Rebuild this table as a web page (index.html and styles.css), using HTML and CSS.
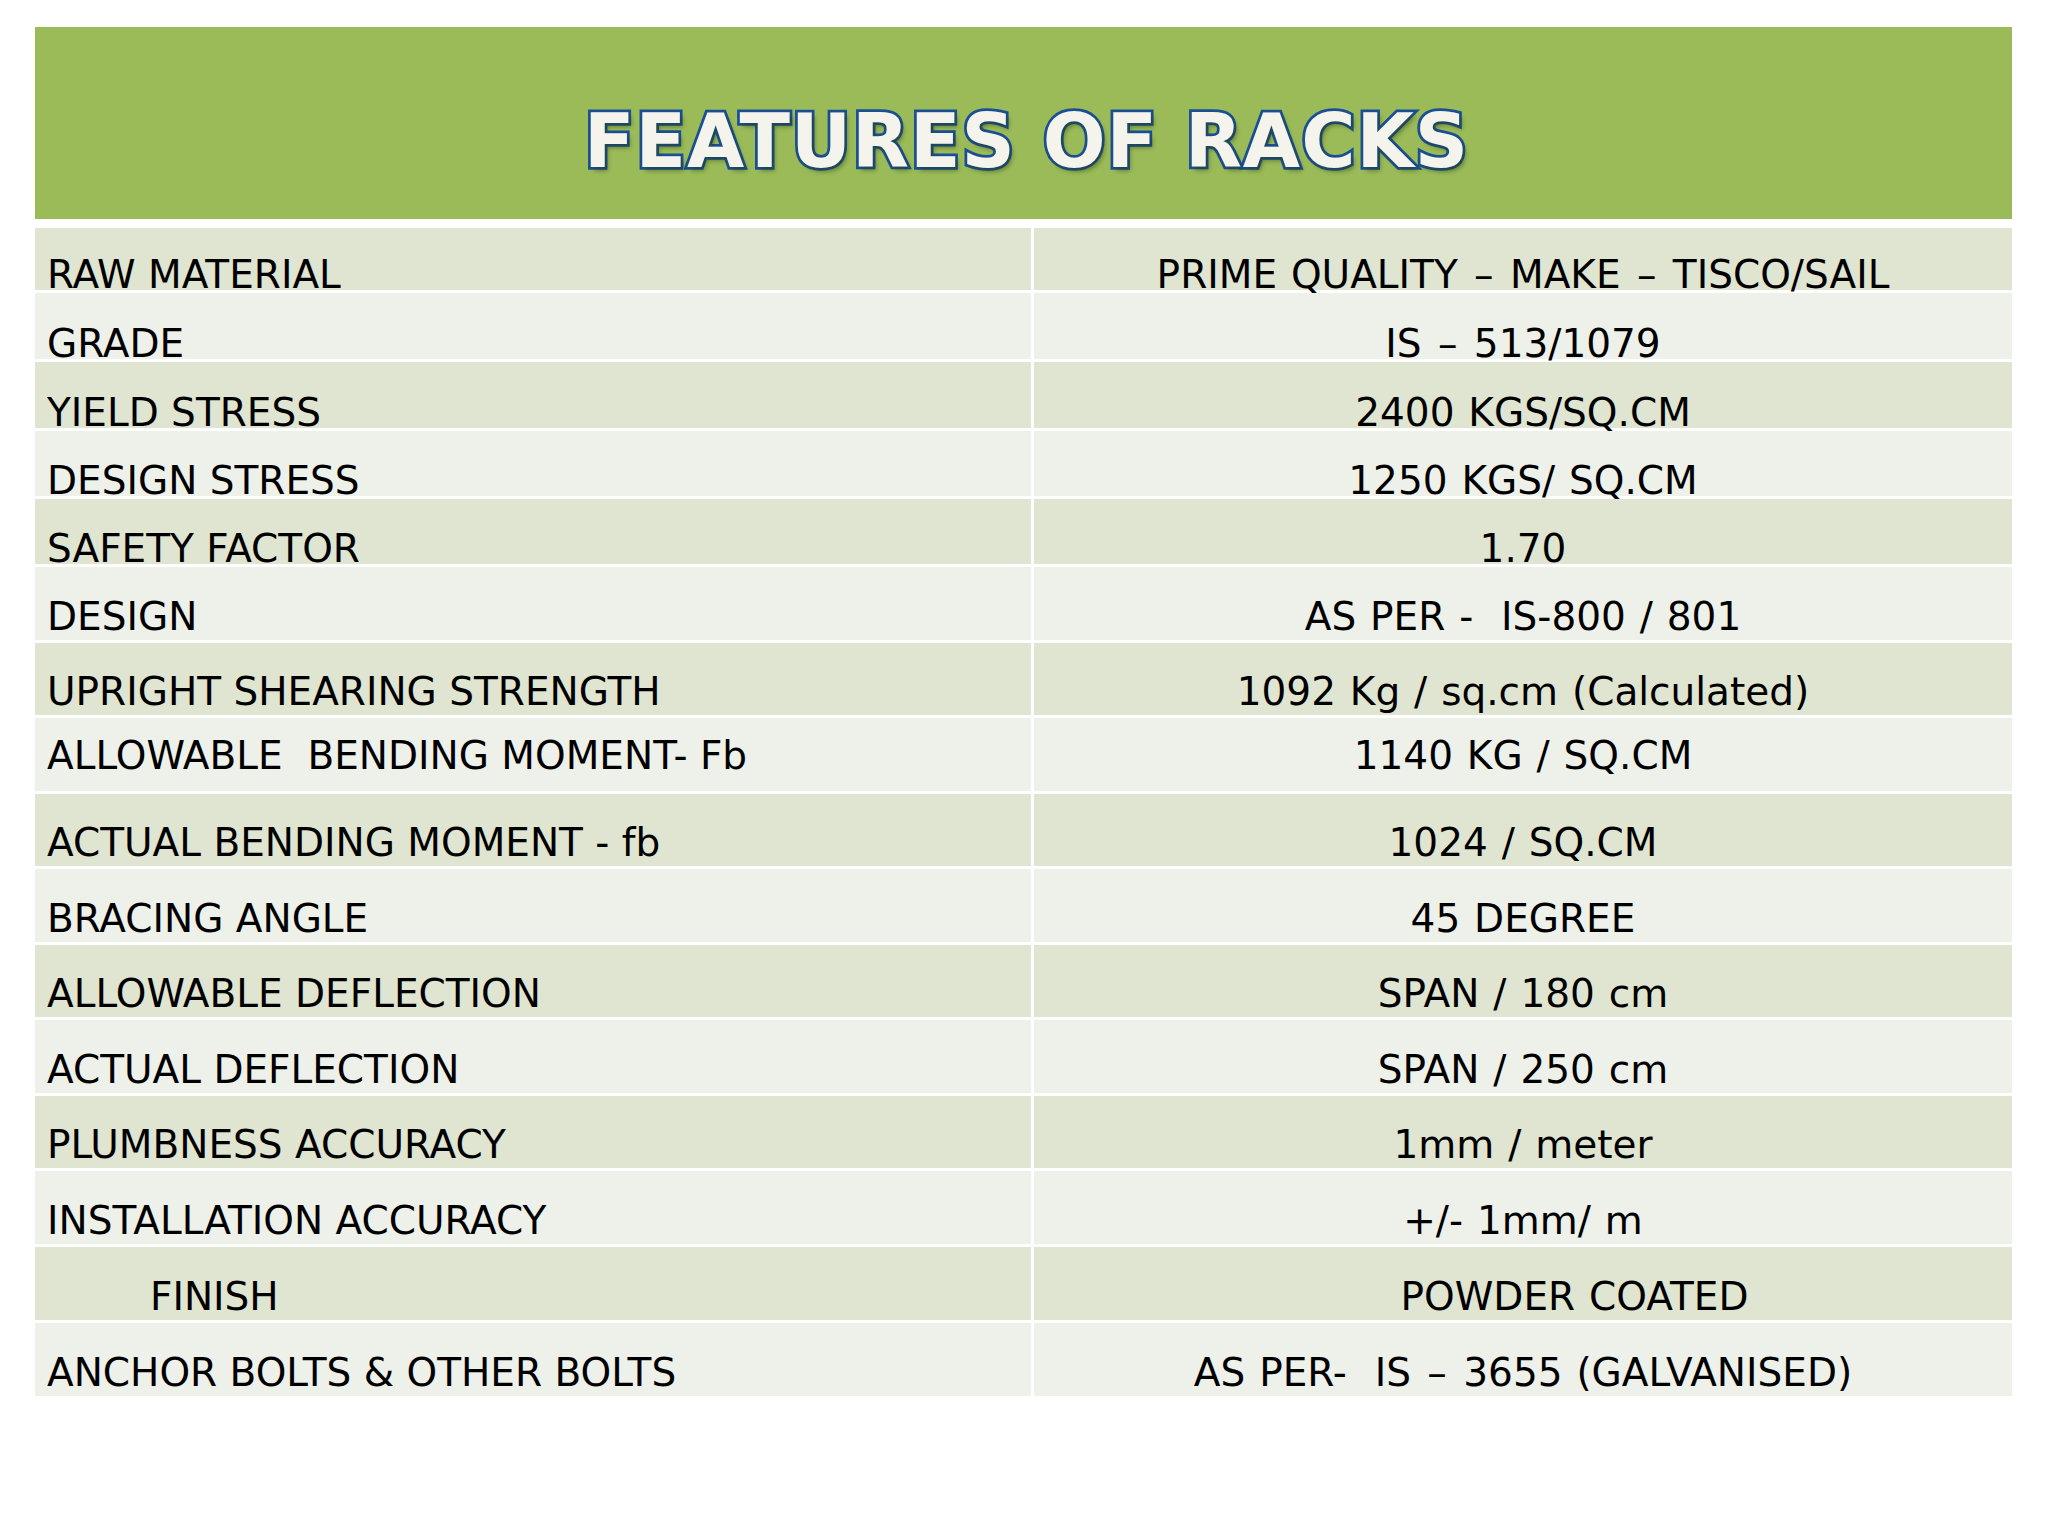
FILE: index.html
```html
<!DOCTYPE html>
<html lang="en">
<head>
<meta charset="utf-8">
<title>Features of Racks</title>
<link rel="stylesheet" href="styles.css">
</head>
<body>
<div class="slide">
  <header class="banner">
    <h1 class="title">FEATURES OF RACKS</h1>
  </header>
  <div class="specs">
    <div class="row"><div class="cell key">RAW MATERIAL</div><div class="cell val">PRIME QUALITY <span class="dash">–</span> MAKE <span class="dash">–</span> TISCO/SAIL</div></div>
    <div class="row"><div class="cell key">GRADE</div><div class="cell val">IS <span class="dash">–</span> 513/1079</div></div>
    <div class="row"><div class="cell key">YIELD STRESS</div><div class="cell val">2400 KGS/SQ.CM</div></div>
    <div class="row"><div class="cell key">DESIGN STRESS</div><div class="cell val">1250 KGS/ SQ.CM</div></div>
    <div class="row"><div class="cell key">SAFETY FACTOR</div><div class="cell val">1.70</div></div>
    <div class="row"><div class="cell key">DESIGN</div><div class="cell val">AS PER -&nbsp; IS-800 / 801</div></div>
    <div class="row"><div class="cell key">UPRIGHT SHEARING STRENGTH</div><div class="cell val">1092 Kg / sq.cm (Calculated)</div></div>
    <div class="row"><div class="cell key">ALLOWABLE&nbsp; BENDING MOMENT- Fb</div><div class="cell val">1140 KG / SQ.CM</div></div>
    <div class="row"><div class="cell key">ACTUAL BENDING MOMENT - fb</div><div class="cell val">1024 / SQ.CM</div></div>
    <div class="row"><div class="cell key">BRACING ANGLE</div><div class="cell val">45 DEGREE</div></div>
    <div class="row"><div class="cell key">ALLOWABLE DEFLECTION</div><div class="cell val">SPAN / 180 cm</div></div>
    <div class="row"><div class="cell key">ACTUAL DEFLECTION</div><div class="cell val">SPAN / 250 cm</div></div>
    <div class="row"><div class="cell key">PLUMBNESS ACCURACY</div><div class="cell val">1mm / meter</div></div>
    <div class="row"><div class="cell key">INSTALLATION ACCURACY</div><div class="cell val">+/- 1mm/ m</div></div>
    <div class="row"><div class="cell key indent">FINISH</div><div class="cell val indent">POWDER COATED</div></div>
    <div class="row"><div class="cell key">ANCHOR BOLTS &amp; OTHER BOLTS</div><div class="cell val">AS PER-&nbsp; IS <span class="dash">–</span> 3655 (GALVANISED)</div></div>
  </div>
</div>
</body>
</html>
```

FILE: styles.css
```css
html, body {
  margin: 0;
  padding: 0;
  background: #ffffff;
}

.slide {
  width: 2048px;
  height: 1536px;
  box-sizing: border-box;
  padding: 27px 36px 0 35px;
  background: #ffffff;
  font-family: "DejaVu Sans", Verdana, sans-serif;
  color: #000000;
  overflow: hidden;
}

.banner {
  height: 192px;
  background: #9bbb59;
  box-sizing: border-box;
  padding-top: 77px;
  display: flex;
  justify-content: center;
  align-items: flex-start;
}

.title {
  margin: 0 0 0 6px;
  font-family: "DejaVu Sans", Verdana, sans-serif;
  font-weight: bold;
  font-size: 74px;
  line-height: 74px;
  letter-spacing: 1px;
  color: #f4f3ec;
  -webkit-text-stroke: 5.5px #1a4f94;
  paint-order: stroke fill;
  text-shadow: 3px 4px 4px rgba(40, 60, 20, 0.45);
}

.specs {
  margin-top: 9px;
  display: flex;
  flex-direction: column;
  gap: 3px;
}

.row {
  display: grid;
  grid-template-columns: 996px 978px;
  column-gap: 3px;
  height: 73px;
}

.row:nth-child(1) { height: 62px; }
.row:nth-child(2) { height: 66px; }
.row:nth-child(3) { height: 66px; }
.row:nth-child(4) { height: 65px; }
.row:nth-child(5) { height: 65px; }
.row:nth-child(7) { height: 72px; }
.row:nth-child(9) { height: 72px; }
.row:nth-child(11) { height: 72px; }
.row:nth-child(13) { height: 72px; }

.cell {
  display: flex;
  align-items: flex-end;
  font-size: 39px;
  line-height: 31px;
  white-space: pre;
  padding-bottom: 8px;
  box-sizing: border-box;
  background: #eef1ea;
}

.row:nth-child(odd) .cell {
  background: #dfe5d0;
}

.row:nth-child(-n+5) .cell {
  padding-bottom: 0;
}

.row:nth-child(8) .cell {
  padding-bottom: 20px;
}

.key {
  padding-left: 12px;
}

.val {
  justify-content: center;
  word-spacing: 1.5px;
}

.dash {
  margin: 0 2.5px;
}

.key.indent {
  padding-left: 115px;
}

.val.indent {
  padding-left: 103px;
}
```
